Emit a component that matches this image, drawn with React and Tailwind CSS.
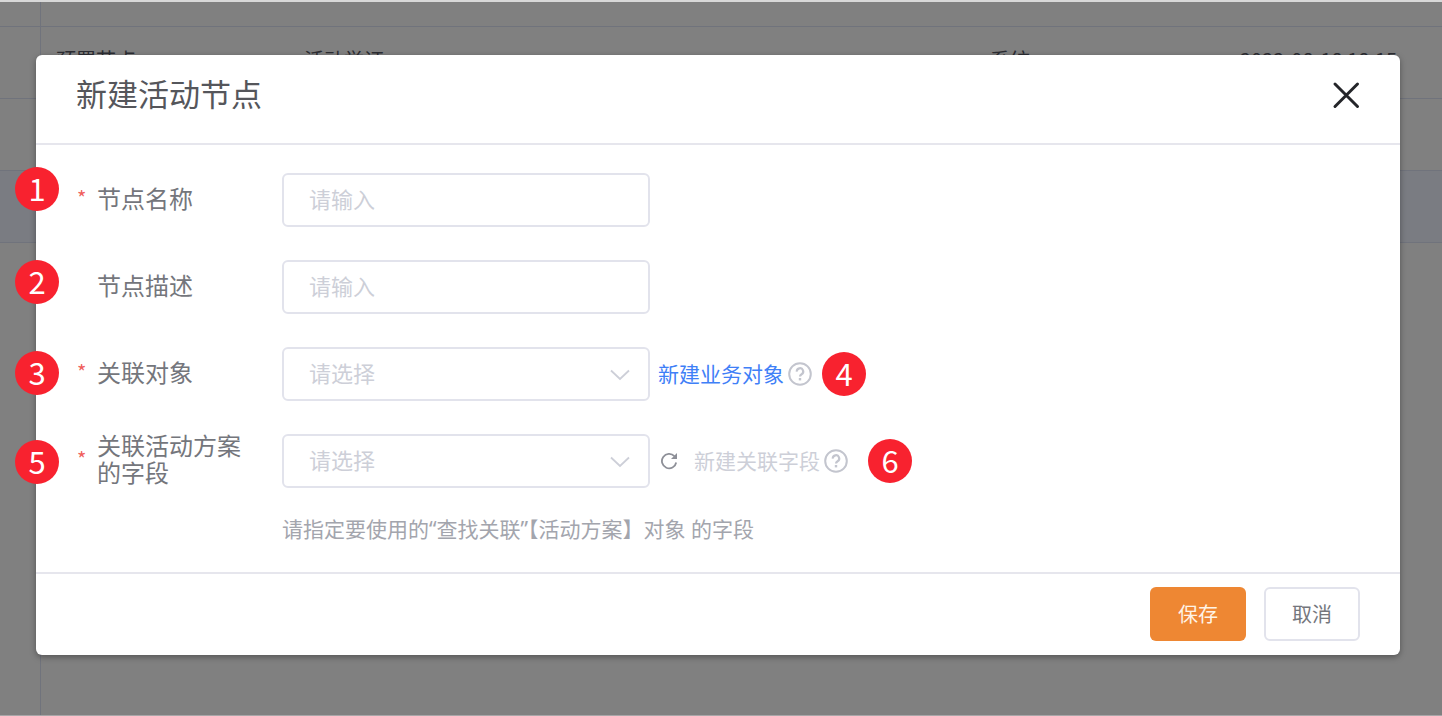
import { useState } from 'react'

const records = [
  { id: 1 },
  { id: 2, type: '预置节点', name: '活动举证', owner: '系统', updatedAt: '2022-08-18 18:15' },
  { id: 3 },
  { id: 4, active: true },
  { id: 5 },
]

function Badge({ n, className }) {
  return (
    <span className={`absolute flex h-11 w-11 items-center justify-center rounded-full bg-[#f8222f] pb-1 text-[31px] leading-none text-white ${className}`}>
      {n}
    </span>
  )
}

function Field({ id, label, required, badge, badgeClass, children }) {
  return (
    <div className="relative flex h-[54px] items-center">
      <Badge n={badge} className={badgeClass} />
      <span className="w-5 pb-1 text-[20px] leading-none text-[#f0605c]">{required && '*'}</span>
      <label htmlFor={id} className="w-[185px] pr-8 pb-1.5 text-[24px] leading-[27px] text-[#74767c]">{label}</label>
      {children}
    </div>
  )
}

function TextField({ id, value, onChange }) {
  return (
    <input
      id={id}
      type="text"
      placeholder="请输入"
      value={value}
      onChange={(e) => onChange(e.target.value)}
      className="h-[54px] w-[368px] rounded-md border-2 border-[#e2e3ec] px-[25px] pb-1 text-[22px] text-[#4a4c52] outline-none placeholder:text-[#cdcfd8]"
    />
  )
}

function SelectField({ id }) {
  return (
    <div className="relative w-[368px]">
      <select id={id} defaultValue="" className="h-[54px] w-full appearance-none rounded-md border-2 border-[#e2e3ec] bg-white px-[25px] pb-1 text-[22px] text-[#cdcfd8] outline-none">
        <option value="">请选择</option>
      </select>
      <svg className="pointer-events-none absolute top-[22px] right-5 h-3 w-5" viewBox="0 0 20 12" fill="none" stroke="#cdcfd8" strokeWidth="1.8">
        <path d="M1 1.5 10 10l9-8.5" />
      </svg>
    </div>
  )
}

function HelpIcon() {
  return (
    <svg className="h-6 w-6" viewBox="0 0 24 24" fill="none" stroke="#c3c5ce" strokeWidth="2">
      <circle cx="12" cy="12" r="10.8" />
      <path d="M8.8 9.6a3.2 3.2 0 1 1 4.8 2.6c-1 .6-1.6 1.2-1.6 2.3" strokeWidth="2.2" />
      <path d="M12 16v2.4" strokeWidth="2.4" />
    </svg>
  )
}

export default function App() {
  const [name, setName] = useState('')
  const [desc, setDesc] = useState('')

  return (
    <div className="relative flex min-h-screen flex-col overflow-hidden bg-[#808080] font-['Noto_Sans_CJK_SC',sans-serif]">
      <div className="absolute inset-0 border-t-2 border-b border-t-[#d8d8d8] border-b-[#a8a6a8]">
        <div className="absolute inset-y-0 left-10 w-px bg-[#70737c]" />
        <table className="w-full table-fixed border-collapse text-[20px] leading-5 text-[#2c2d33]">
          <colgroup>
            <col className="w-10" />
            <col className="w-[248px]" />
            <col />
            <col className="w-[250px]" />
            <col className="w-[218px]" />
          </colgroup>
          <tbody>
            {records.map((r) => (
              <tr key={r.id} className={`align-top ${r.id === 1 ? 'h-6' : 'h-[72px]'} ${r.active ? 'bg-[#7a7c82]' : ''} ${r.id === 5 ? '' : 'border-b border-[#70737c]'}`}>
                <td />
                <td className={r.name && 'pt-[23px] pl-4'}>{r.type}</td>
                <td className={r.name && 'pt-[23px] pl-4'}>{r.name}</td>
                <td className={r.name && 'pt-[23px] pl-4'}>{r.owner}</td>
                <td className={r.name && 'pt-[23px] pl-4 whitespace-nowrap'}>{r.updatedAt}</td>
              </tr>
            ))}
          </tbody>
        </table>
      </div>

      <div role="dialog" aria-labelledby="dialog-title" className="relative mt-[55px] mr-[42px] mb-[61px] ml-9 rounded-md bg-white shadow-[0_2px_6px_rgba(0,0,0,0.35)]">
        <div className="flex h-[90px] items-center justify-between border-b-2 border-[#e6e6ed] px-10 pb-2">
          <h1 id="dialog-title" className="pb-1 text-[31px] leading-8 text-[#55565b]">新建活动节点</h1>
          <button type="button" aria-label="关闭">
            <svg className="h-7 w-7" viewBox="0 0 28 28" fill="none" stroke="#242529" strokeWidth="3" strokeLinecap="round">
              <path d="m3 3 22.5 22.5M25.5 3 3 25.5" />
            </svg>
          </button>
        </div>

        <form className="flex flex-col gap-[33px] px-[41px] pt-7 pb-7">
          <Field id="name" label="节点名称" required badge={1} badgeClass="-left-[62px] -top-1.5">
            <TextField id="name" value={name} onChange={setName} />
          </Field>
          <Field id="desc" label="节点描述" badge={2} badgeClass="-left-[62px] top-0">
            <TextField id="desc" value={desc} onChange={setDesc} />
          </Field>
          <Field id="object" label="关联对象" required badge={3} badgeClass="-left-[62px] top-1">
            <SelectField id="object" />
            <div className="relative ml-2 flex items-center gap-1">
              <a href="#" className="text-[21px] text-[#3f80f7]">新建业务对象</a>
              <HelpIcon />
              <Badge n={4} className="left-full ml-2.5" />
            </div>
          </Field>
          <div>
            <Field id="field" label="关联活动方案的字段" required badge={5} badgeClass="-left-[62px] top-1.5">
              <SelectField id="field" />
              <button type="button" aria-label="刷新" className="ml-2.5">
                <svg className="h-[18px] w-[18px]" viewBox="0 0 18 18" fill="none" stroke="#8e9098" strokeWidth="1.8">
                  <path d="M16.2 10.5A7.2 7.2 0 1 1 14.4 4.2" />
                  <path d="M17 1v6h-6Z" fill="#8e9098" stroke="none" />
                </svg>
              </button>
              <div className="relative ml-4 flex items-center gap-1">
                <a href="#" className="text-[21px] text-[#cdcfd8]">新建关联字段</a>
                <HelpIcon />
                <Badge n={6} className="left-full ml-5" />
              </div>
            </Field>
            <p className="mt-[26px] ml-[205px] font-['Noto_Sans','Noto_Sans_CJK_SC',sans-serif] text-[21px] leading-[30px] text-[#a3a5ad]">
              请指定要使用的“查找关联”【活动方案】对象 的字段
            </p>
          </div>
        </form>

        <div className="flex justify-end gap-[18px] border-t-2 border-[#e6e6ed] px-10 pt-[13px] pb-[14px]">
          <button type="button" className="h-[54px] w-24 rounded-md bg-[#ee8733] text-[20px] text-[#fff3e6]">保存</button>
          <button type="button" className="h-[54px] w-24 rounded-md border-2 border-[#e2e3ec] text-[20px] text-[#74767c]">取消</button>
        </div>
      </div>
    </div>
  )
}
